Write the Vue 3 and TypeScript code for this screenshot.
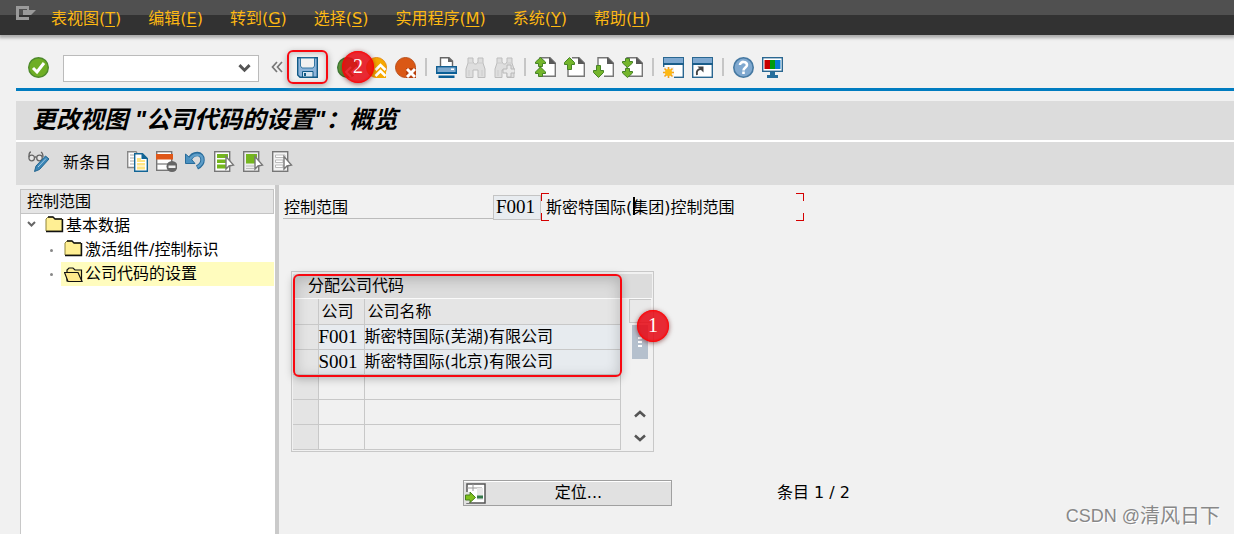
<script setup lang="ts">
import { ref } from 'vue'

interface MenuItem { label: string; key: string }
interface CompanyRow { code: string; name: string }

const menus: MenuItem[] = [
  { label: '表视图', key: 'T' },
  { label: '编辑', key: 'E' },
  { label: '转到', key: 'G' },
  { label: '选择', key: 'S' },
  { label: '实用程序', key: 'M' },
  { label: '系统', key: 'Y' },
  { label: '帮助', key: 'H' },
]

const rows: CompanyRow[] = [
  { code: 'F001', name: '斯密特国际(芜湖)有限公司' },
  { code: 'S001', name: '斯密特国际(北京)有限公司' },
  { code: '', name: '' },
  { code: '', name: '' },
  { code: '', name: '' },
]

const command = ref('')
const areaCode = ref('F001')
const areaName = ref('斯密特国际(集团)控制范围')
</script>

<template>
  <div class="window">
    <header class="menubar">
      <svg class="exit-icon" viewBox="0 0 20 14" aria-hidden="true">
        <path d="M0 0H13V4H20L15 9H7V4H11V3H3V11H13V14H0Z" fill="#9a9a9a" />
      </svg>
      <nav class="menus">
        <button v-for="m in menus" :key="m.key" type="button">{{ m.label }}(<u>{{ m.key }}</u>)</button>
      </nav>
    </header>

    <div class="content">
      <div class="toolbar">
        <button type="button" class="icon" aria-label="Enter">
          <svg viewBox="0 0 21 21">
            <circle cx="10.500" cy="10.500" r="9.800" fill="#6fae25" stroke="#4e8a2c" stroke-width="1.400" />
            <path d="M5 11L9 15L16 6" fill="none" stroke="#fff" stroke-width="3" />
          </svg>
        </button>
        <div class="command">
          <input v-model="command" type="text" aria-label="Command">
          <svg viewBox="0 0 11 8" aria-hidden="true"><path d="M1 1L5.500 5.500L10 1" fill="none" stroke="#555" stroke-width="2.600" /></svg>
        </div>
        <button type="button" class="collapse" aria-label="Collapse">
          <svg viewBox="0 0 12 12"><path d="M6 1L1.500 6L6 11M11 1L6.500 6L11 11" fill="none" stroke="#777" stroke-width="1.700" /></svg>
        </button>
        <div class="save">
          <button type="button" class="icon" aria-label="Save">
            <svg viewBox="0 0 21 21">
              <path d="M0.700 0.700H20.300V20.300H3L0.700 18Z" fill="#8db4da" stroke="#125a87" stroke-width="1.400" />
              <path d="M3.500 1H17.500V9L16 11H5L3.500 9Z" fill="#f1f1f1" stroke="#3577a3" stroke-width="1" />
              <path d="M5.500 20V14.500H16V20Z" fill="#d6e5f1" stroke="#125a87" />
              <path d="M7 16H9V19H7Z" fill="#125a87" />
            </svg>
          </button>
        </div>
        <div class="back">
          <button type="button" class="icon" aria-label="Back">
            <svg viewBox="0 0 21 21">
              <circle cx="10.500" cy="10.500" r="9.800" fill="#5d9c3c" stroke="#3d7a34" stroke-width="1.400" />
              <path d="M14 10L9 15L14 20M20 10L15 15L20 20" fill="none" stroke="#fff" stroke-width="2" />
            </svg>
          </button>
          <span class="badge">2</span>
        </div>
        <button type="button" class="icon" aria-label="Exit">
          <svg viewBox="0 0 21 21">
            <circle cx="10.500" cy="10.500" r="10" fill="#f6a800" stroke="#e38b12" />
            <path d="M9 14L14.500 8L20 14V21H9Z" fill="#f6a800" />
            <path d="M9.500 13L14.500 8L19.500 13M9.500 19L14.500 14L19.500 19" fill="none" stroke="#fff" stroke-width="2.500" />
          </svg>
        </button>
        <button type="button" class="icon" aria-label="Cancel">
          <svg viewBox="0 0 21 21">
            <circle cx="10.500" cy="10.500" r="10" fill="#da5815" stroke="#b9501c" />
            <path d="M11 11H21V21H11Z" fill="#b9400c" />
            <path d="M12 12L20 20M20 12L12 20" fill="none" stroke="#fff" stroke-width="3" />
          </svg>
        </button>
        <i class="sep" />
        <button type="button" class="icon" aria-label="Print">
          <svg viewBox="0 0 21 21">
            <path d="M4.500 9V0.700H13L16.500 4V9" fill="#fff" stroke="#666" stroke-width="1.400" />
            <path d="M12 0L17 5H12Z" fill="#666" />
            <rect x="0.700" y="9.700" width="19.600" height="6.600" fill="#7faacf" stroke="#125f92" stroke-width="1.400" />
            <path d="M0 15H21V17H0ZM2.500 18.500H18.500V21H2.500Z" fill="#0b5f96" />
            <path d="M15 11.500H18V13H15Z" fill="#fff" />
          </svg>
        </button>
        <button type="button" class="icon" aria-label="Find" disabled>
          <svg viewBox="0 0 21 21">
            <path d="M3 1H8V5L9.500 7H11.500L13 5V1H18V6L20 12V20.500H13V13H8V20.500H1V12L3 6Z" fill="#dedede" stroke="#bdbdbd" />
            <path d="M3 6H8M13 6H18M4 13V19M17 13V19" stroke="#ccc" />
          </svg>
        </button>
        <button type="button" class="icon" aria-label="Find next" disabled>
          <svg viewBox="0 0 21 21">
            <path d="M3 1H8V5L9.500 7H11.500L13 5V1H18V6L20 12V20.500H13V13H8V20.500H1V12L3 6Z" fill="#dedede" stroke="#bdbdbd" />
            <path d="M3 6H8M13 6H18M4 13V19" stroke="#ccc" />
            <path d="M13 8H17V12H21V16H17V20H13V16H9V12H13Z" fill="#e8e8e8" stroke="#b8b8b8" />
          </svg>
        </button>
        <i class="sep" />
        <button type="button" class="icon" aria-label="First page">
          <svg viewBox="0 0 21 21">
            <path d="M5 0.700H15L20.300 6V19.300H5Z" fill="#fff" stroke="#777" stroke-width="1.400" />
            <path d="M14 0L21 7H14Z" fill="#595959" />
            <path d="M5.500 0.500L10.500 5V6.500H7.500V9.500H3.500V6.500H0.500V5ZM5.500 10L10.500 15V16.500H7.500V19.500H3.500V16.500H0.500V15Z" fill="#74b52b" stroke="#468326" />
          </svg>
        </button>
        <button type="button" class="icon" aria-label="Previous page">
          <svg viewBox="0 0 21 21">
            <path d="M8 0.700H15L20.300 6V19.300H4V12" fill="#fff" stroke="#777" stroke-width="1.400" />
            <path d="M14 0L21 7H14Z" fill="#595959" />
            <path d="M5.500 0.500L10.500 5.500V7.500H7.500V12.500H3.500V7.500H0.500V5.500Z" fill="#74b52b" stroke="#468326" />
          </svg>
        </button>
        <button type="button" class="icon" aria-label="Next page">
          <svg viewBox="0 0 21 21">
            <path d="M5 9V0.700H15L20.300 6V19.300H11" fill="#fff" stroke="#777" stroke-width="1.400" />
            <path d="M14 0L21 7H14Z" fill="#595959" />
            <path d="M5.500 20.500L10.500 15.500V13.500H7.500V8.500H3.500V13.500H0.500V15.500Z" fill="#74b52b" stroke="#468326" />
          </svg>
        </button>
        <button type="button" class="icon" aria-label="Last page">
          <svg viewBox="0 0 21 21">
            <path d="M5 0.700H15L20.300 6V19.300H5Z" fill="#fff" stroke="#777" stroke-width="1.400" />
            <path d="M14 0L21 7H14Z" fill="#595959" />
            <path d="M5.500 10.500L10.500 6V4.500H7.500V1.500H3.500V4.500H0.500V6ZM5.500 20.500L10.500 16V14.500H7.500V11.500H3.500V14.500H0.500V16Z" fill="#74b52b" stroke="#468326" />
          </svg>
        </button>
        <i class="sep" />
        <button type="button" class="icon" aria-label="New session">
          <svg viewBox="0 0 21 21">
            <rect x="0.700" y="0.700" width="19.600" height="19.600" fill="#fff" stroke="#2a6791" stroke-width="1.400" />
            <path d="M1 1H20V6H1Z" fill="#7ea8d0" /><path d="M0 6H21V8H0Z" fill="#1a5d8a" />
            <path d="M0 10H11V21H0Z" fill="#f1f1f1" />
            <path d="M5.500 10V21M0 15.500H11M1.500 11.500L9.500 19.500M9.500 11.500L1.500 19.500" stroke="#f3a21b" stroke-width="1.600" />
            <circle cx="5.500" cy="15.500" r="3.500" fill="#fdb913" />
          </svg>
        </button>
        <button type="button" class="icon" aria-label="Create shortcut">
          <svg viewBox="0 0 21 21">
            <rect x="0.700" y="0.700" width="19.600" height="19.600" fill="#fff" stroke="#2a6791" stroke-width="1.400" />
            <path d="M1 1H20V6H1Z" fill="#7ea8d0" /><path d="M0 6H21V8H0Z" fill="#1a5d8a" />
            <path d="M5 18C4 14 6 12 9 12" fill="none" stroke="#444" stroke-width="2" />
            <path d="M5.500 9.500H11.500V15.500Z" fill="#444" />
          </svg>
        </button>
        <i class="sep" />
        <button type="button" class="icon" aria-label="Help">
          <svg viewBox="0 0 21 21">
            <circle cx="10.500" cy="10.500" r="9.700" fill="#7fa8cf" stroke="#4679a2" stroke-width="1.600" />
            <path d="M7 8C7 3.800 14 4 14 8C14 10.500 10.500 10.500 10.500 13.500M10.500 14.500V17" fill="none" stroke="#fff" stroke-width="2.600" />
          </svg>
        </button>
        <button type="button" class="icon" aria-label="Customize layout">
          <svg viewBox="0 0 21 21">
            <rect x="0.700" y="0.700" width="19.600" height="13.600" fill="#fff" stroke="#2a6791" stroke-width="1.400" />
            <path d="M2.500 3H8V12H2.500Z" fill="#c80000" /><path d="M8 3H13V12H8Z" fill="#009b0c" /><path d="M13 3H18.500V12H13Z" fill="#087bd0" />
            <path d="M8 15H13V18H16V21H5V18H8Z" fill="#286f9d" />
          </svg>
        </button>
      </div>

      <h1 class="title">更改视图 "公司代码的设置"：概览</h1>

      <div class="appbar">
        <button type="button" class="icon" aria-label="Display / change">
          <svg viewBox="0 0 21 21">
            <path d="M1 6C1 3 1 1 3 1M13 1C15 2 15 4 15 6M7 6H8.500" fill="none" stroke="#666" stroke-width="1.300" />
            <circle cx="3.700" cy="7" r="2.800" fill="#e6e6e6" stroke="#666" stroke-width="1.300" />
            <circle cx="11.500" cy="7" r="2.800" fill="#e6e6e6" stroke="#666" stroke-width="1.300" />
            <path d="M6.500 20.500L8 15L17.500 5L21 8L11.500 18.500Z" fill="#3a86b7" stroke="#22658f" />
            <path d="M10 16L18 7.500" stroke="#a7cbe4" />
          </svg>
        </button>
        <button type="button" class="text-button">新条目</button>
        <div class="icon-group">
          <button type="button" class="icon" aria-label="Copy">
            <svg viewBox="0 0 21 21">
              <path d="M7 16.500H0.700V0.700H9L10 2" fill="#fff" stroke="#888" stroke-width="1.400" />
              <path d="M3 4H7M3 7H7M3 10H7M3 13H7" stroke="#aaa" />
              <path d="M7.700 2.700H15.500L20.300 7.500V20.300H7.700Z" fill="#fff" stroke="#126595" stroke-width="1.400" />
              <path d="M14.500 2L21 8H14.500Z" fill="#126595" />
              <path d="M10 7H14V9H18V18.500H10Z" fill="#ffe584" /><path d="M10 11.500H18M10 15H18" stroke="#fff" />
            </svg>
          </button>
          <button type="button" class="icon" aria-label="Delete">
            <svg viewBox="0 0 21 21">
              <rect x="0.700" y="0.700" width="15" height="18.600" fill="#fff" stroke="#777" stroke-width="1.400" />
              <path d="M0 3H17V8.500H0Z" fill="#df5617" /><path d="M1 13H16" stroke="#888" stroke-width="1.400" />
              <circle cx="16" cy="15.500" r="5.500" fill="#666" /><path d="M12.500 14.500H19.500V17H12.500Z" fill="#eee" />
            </svg>
          </button>
          <button type="button" class="icon" aria-label="Undo">
            <svg viewBox="0 0 21 21">
              <path d="M5 8C8 1.500 17.500 1 17.500 9C17.500 13 15 15 12 16.500" fill="none" stroke="#286c9b" stroke-width="4.500" />
              <path d="M0.500 3V12.500H10L7 9L4 6Z" fill="#4a91c0" stroke="#286c9b" />
              <path d="M5 8C8.500 2.500 17.500 2 17.500 9C17.500 12.500 15 14.500 12.500 16" fill="none" stroke="#5d9dc8" stroke-width="2.500" />
            </svg>
          </button>
          <button type="button" class="icon" aria-label="Select all">
            <svg viewBox="0 0 21 21">
              <rect x="0.700" y="0.700" width="15" height="19.600" fill="#fff" stroke="#777" stroke-width="1.400" />
              <path d="M3 3H14V7H3ZM3 8.500H12V12H3ZM3 13.500H12V17.500H3Z" fill="#75b61e" />
              <path d="M12 5.500V18L15 15L19.500 14Z" fill="#fff" stroke="#777" stroke-width="1.400" />
            </svg>
          </button>
          <button type="button" class="icon" aria-label="Select block">
            <svg viewBox="0 0 21 21">
              <rect x="0.700" y="0.700" width="15" height="19.600" fill="#eee" stroke="#777" stroke-width="1.400" />
              <path d="M3 3H14V12.500H3Z" fill="#75b61e" /><path d="M3 15H11M3 17.500H11" stroke="#bbb" />
              <path d="M12 5.500V18L15 15L19.500 14Z" fill="#fff" stroke="#777" stroke-width="1.400" />
            </svg>
          </button>
          <button type="button" class="icon" aria-label="Deselect all">
            <svg viewBox="0 0 21 21">
              <rect x="0.700" y="0.700" width="15" height="19.600" fill="#f3f3f3" stroke="#777" stroke-width="1.400" />
              <path d="M3.500 4H13V6.500H3.500ZM3.500 9H11V11.500H3.500ZM3.500 14H11V16.500H3.500Z" fill="#fff" stroke="#bbb" />
              <path d="M12 5.500V18L15 15L19.500 14Z" fill="#fff" stroke="#777" stroke-width="1.400" />
            </svg>
          </button>
        </div>
      </div>

      <div class="panes">
        <aside class="tree">
          <div class="tree-head">控制范围</div>
          <ul>
            <li class="root">
              <svg class="chev" viewBox="0 0 9 7" aria-hidden="true"><path d="M1 1L4.500 4.500L8 1" fill="none" stroke="#666" stroke-width="2" /></svg>
              <span class="node">
                <svg class="folder" viewBox="0 0 19 17" aria-hidden="true">
                  <path d="M1 15V3L3 1H8L10 3H17V15Z" fill="#ffef94" stroke="#8f8439" />
                  <path d="M3 1H8L10 3H17M17.500 3V15.500H1" fill="none" stroke="#111" stroke-width="1.400" />
                </svg>基本数据</span>
            </li>
            <li>
              <i class="dot" />
              <span class="node">
                <svg class="folder" viewBox="0 0 19 17" aria-hidden="true">
                  <path d="M1 15V3L3 1H8L10 3H17V15Z" fill="#ffef94" stroke="#8f8439" />
                  <path d="M3 1H8L10 3H17M17.500 3V15.500H1" fill="none" stroke="#111" stroke-width="1.400" />
                </svg>激活组件/控制标识</span>
            </li>
            <li>
              <i class="dot" />
              <span class="node selected">
                <svg class="folder" viewBox="0 0 19 17" aria-hidden="true">
                  <path d="M3 15V4L5 2H9L11 4H17.500V15Z" fill="#ffef94" stroke="#111" stroke-width="1.200" />
                  <path d="M0.500 6.500H14L18 15.500H4Z" fill="#ffe98c" stroke="#111" stroke-width="1.200" />
                </svg>公司代码的设置</span>
            </li>
          </ul>
        </aside>

        <main class="detail">
          <div class="field-row">
            <label for="area">控制范围</label>
            <input id="area" v-model="areaCode" class="code-field" type="text" readonly>
            <div class="name-field">
              <input v-model="areaName" type="text" aria-label="控制范围名称" readonly>
              <i class="corner tl" /><i class="corner tr" /><i class="corner bl" /><i class="corner br" />
              <i class="caret" />
            </div>
          </div>

          <section class="grid-box">
            <h2>分配公司代码</h2>
            <div class="grid-body">
              <table>
                <thead>
                  <tr><th class="sel" /><th class="code">公司</th><th>公司名称</th></tr>
                </thead>
                <tbody>
                  <tr v-for="(r, i) in rows" :key="i" :class="{ filled: r.code }">
                    <td class="sel" /><td class="code">{{ r.code }}</td><td>{{ r.name }}</td>
                  </tr>
                </tbody>
              </table>
              <div class="scroll">
                <button type="button" class="config" aria-label="Configure table" />
                <div class="thumb"><i /><i /><i /></div>
                <button type="button" class="arrow" aria-label="Scroll up">
                  <svg viewBox="0 0 12 8"><path d="M1 6.500L6 2L11 6.500" fill="none" stroke="#555" stroke-width="2.500" /></svg>
                </button>
                <button type="button" class="arrow" aria-label="Scroll down">
                  <svg viewBox="0 0 12 8"><path d="M1 1.500L6 6L11 1.500" fill="none" stroke="#555" stroke-width="2.500" /></svg>
                </button>
              </div>
            </div>
            <div class="highlight" />
            <span class="badge">1</span>
          </section>

          <div class="footer">
            <button type="button" class="position">
              <svg viewBox="0 0 21 21" aria-hidden="true">
                <path d="M2 1H20V20H2Z" fill="#fff" stroke="#555" stroke-width="1.500" />
                <path d="M8 1V8M2 5H17" stroke="#999" /><path d="M12 5H18V17H12Z" fill="#e8e8e8" />
                <path d="M12 12.500H18V15.500H12Z" fill="#34784a" />
                <path d="M0 9H4V20H0Z" fill="#e1e1e1" />
                <path d="M0.500 12H5V9L10.500 14.500L5 19.500V17H0.500Z" fill="#7fc01e" stroke="#497e1d" />
              </svg>
              <span>定位...</span>
            </button>
            <span>条目 1 / 2</span>
          </div>
        </main>
      </div>
    </div>
    <div class="watermark"><span>CSDN @</span>清风日下</div>
  </div>
</template>

<style>
html, body { margin: 0; background: #f1f1f1; }
</style>

<style scoped>
.window {
  position: relative;
  display: flex;
  flex-direction: column;
  min-height: 100vh;
  overflow: hidden;
  box-sizing: border-box;
  background: #f1f1f1;
  color: #000;
  font: 16px/24px "DejaVu Sans", "Noto Sans CJK SC", sans-serif;
}
.window * { box-sizing: border-box; }
button, input { font: inherit; color: inherit; padding: 0; margin: 0; border: 0; border-radius: 0; background: none; outline: 0; min-width: 0; }
button { white-space: nowrap; }
svg { display: block; flex: none; }

.menubar {
  display: flex;
  height: 35px;
  background: linear-gradient(#505050 15px, #323232 15px);
  box-shadow: 0 2px 3px 1px #aaa;
  padding-left: 16px;
}
.exit-icon { width: 20px; height: 14px; margin-top: 6px; }
.menus { display: flex; gap: 27px; margin-left: 15px; align-items: center; }
.menus button { color: #fdb813; height: 35px; padding-top: 2px; }
u { text-underline-offset: 2px; }

.content { flex: 1; display: flex; flex-direction: column; margin-left: 16px; }

.toolbar {
  display: flex;
  align-items: center;
  gap: 8px;
  height: 56px;
  padding: 11px 12px 0;
  border-bottom: 3px solid #007cc0;
}
.icon { width: 21px; height: 21px; flex: none; }
.icon svg { width: 21px; height: 21px; }
.command {
  display: flex;
  align-items: center;
  width: 196px;
  height: 27px;
  margin: 2px 4px 0 6px;
  padding-right: 7px;
  border: 1px solid #bbb;
  background: #fff;
}
.command input { flex: 1; height: 25px; padding: 0 4px; }
.command svg { width: 13px; height: 9px; }
.collapse, .collapse svg { width: 12px; height: 12px; }
.save {
  display: flex;
  align-items: center;
  justify-content: center;
  width: 41px;
  height: 34px;
  margin: 0 1px 0 -4px;
  border: 2px solid #f80810;
  border-radius: 6px;
  box-shadow: 0 2px 6px #aaa, inset 0 1px 5px #bbb;
}
.back { position: relative; height: 21px; }
.badge {
  position: absolute;
  width: 32px;
  height: 32px;
  border-radius: 50%;
  background: rgba(230, 8, 20, 0.86);
  box-shadow: 0 1px 5px rgba(90, 0, 0, 0.6), inset 0 0 2px 1px #f00;
  color: #fff;
  font: 20px/30px "Liberation Serif", serif;
  text-align: center;
}
.back .badge { left: 5px; top: -6px; z-index: 1; }
.sep { width: 2px; height: 18px; margin: 0 1px; background: #c6c6c6; flex: none; }

.title {
  margin: 10px 0 0;
  height: 39px;
  padding-left: 16px;
  background: #dcdcdc;
  font: italic bold 24px/38px "Liberation Sans", "Noto Sans CJK SC", sans-serif;
  white-space: nowrap;
}
.appbar {
  display: flex;
  align-items: center;
  height: 45px;
  padding-left: 12px;
  border-top: 2px solid #fff;
  background: #dcdcdc;
}
.appbar > .icon { margin-bottom: 4px; }
.text-button { margin: 0 16px 2px 14px; }
.icon-group { display: flex; gap: 8px; margin-bottom: 4px; }

.panes { flex: 1; display: flex; }
.tree {
  width: 263px;
  flex: none;
  padding: 4px 0 0 4px;
  border-right: 4px solid #cacaca;
  background: linear-gradient(#f1f1f1, #f1f1f1) 0 0 / 4px 100% no-repeat, linear-gradient(#f1f1f1 4px, #fff 4px);
}
.tree-head { height: 25px; margin-right: 1px; padding-left: 6px; border: 1px solid #c4c4c4; background: #e5e5e5; line-height: 24px; }
.tree ul { list-style: none; margin: 0; padding: 0; border-left: 1px solid #c8c8c8; height: calc(100% - 25px); }
.tree li { display: flex; align-items: center; height: 24px; padding-left: 29px; line-height: 26px; }
.tree li.root { padding-left: 6px; }
.chev { width: 9px; height: 7px; margin: 0 9px 4px 0; }
.dot { width: 3px; height: 3px; border-radius: 50%; background: #888; margin-right: 8px; }
.node { display: flex; flex: 1; gap: 2px; white-space: nowrap; align-items: center; height: 24px; margin-right: 1px; }
.node:not(.selected) .folder { margin-bottom: 4px; }
.tree li:not(.root) .node { padding-left: 3px; }
.selected { background: #fffcbe; }
.folder { width: 19px; height: 17px; }

.detail { flex: 1; padding: 8px 4px 0; min-width: 0; }
.field-row { display: flex; align-items: center; height: 28px; }
.field-row label { width: 210px; height: 24px; padding-left: 1px; line-height: 25px; border-bottom: 1px solid #bbb; margin-bottom: 1px; }
.code-field { width: 48px; height: 25px; padding-left: 2px; border: 1px solid #c4c4c4; background: #e8ecf0; font: 19px/22px "Liberation Serif", serif; }
.name-field { position: relative; width: 263px; height: 28px; }
.name-field input { width: 100%; height: 26px; padding-left: 5px; display: block; }
.corner { position: absolute; width: 8px; height: 8px; border: 0 solid #d40000; }
.tl { left: 0; top: 0; border-width: 1px 0 0 1px; }
.tr { right: 0; top: 0; border-width: 1px 1px 0 0; }
.bl { left: 0; bottom: 0; border-width: 0 0 1px 1px; }
.br { right: 0; bottom: 0; border-width: 0 1px 1px 0; }
.caret { position: absolute; left: 92px; top: 4px; width: 2px; height: 18px; background: #000; }

.grid-box { position: relative; width: 363px; margin: 50px 0 0 8px; padding: 2px 1px 1px; border: 1px solid #c8c8c8; }
.grid-box h2 { margin: 0; height: 24px; padding-left: 15px; background: #dcdcdc; font: inherit; }
.grid-body { display: flex; gap: 8px; border-top: 1px solid #fafafa; }
table { width: 328px; height: 150px; border-collapse: collapse; table-layout: fixed; }
th, td { height: 25px; padding: 0; border: 1px solid #c8c8c8; font-weight: normal; line-height: 22px; text-align: left; white-space: nowrap; }
th { background: #e5e5e5; padding: 2px 0 0 3px; border-top: 0; }
.sel { width: 25px; background: #e4e4e4; border-left: 0; }
.code { width: 46px; }
td.code { font: 19px/22px "Liberation Serif", serif; }
.filled td:not(.sel) { background: #e7ebef; }
.scroll { display: flex; flex-direction: column; align-items: center; width: 22px; }
.config { width: 22px; height: 24px; border: 1px solid #c8c8c8; border-width: 1px 0 1px 1px; background: #e9e9e9; }
.thumb { display: flex; flex-direction: column; align-items: center; justify-content: center; gap: 2px; width: 16px; height: 34px; margin: 2px 0 43px; background: #b5c0cd; }
.thumb i { width: 4px; height: 2px; background: #fff; }
.arrow { height: 24px; display: flex; align-items: center; }
.arrow svg { width: 12px; height: 8px; }
.highlight { position: absolute; left: 1px; top: 2px; width: 329px; height: 103px; border: 2px solid #f80810; border-radius: 6px; box-shadow: 0 2px 8px rgba(0, 0, 0, 0.25), inset 0 3px 14px rgba(0, 0, 0, 0.2); }
.grid-box .badge { left: 345px; top: 38px; }

.footer { display: flex; align-items: center; gap: 105px; margin: 28px 0 0 180px; }
.position { display: flex; align-items: center; width: 209px; height: 26px; border: 1px solid #a0a0a0; background: #e1e1e1; box-shadow: inset 0 1px #fff; }
.position svg { width: 21px; height: 21px; margin-left: 1px; }
.position span { flex: 1; text-align: center; }

.watermark { position: absolute; right: 14px; bottom: 4px; display: flex; align-items: center; font-size: 20px; line-height: 28px; color: #888; text-shadow: 1px 1px #fff; }
.watermark span { font: 18px/28px "Liberation Sans", sans-serif; white-space: pre; }
</style>
